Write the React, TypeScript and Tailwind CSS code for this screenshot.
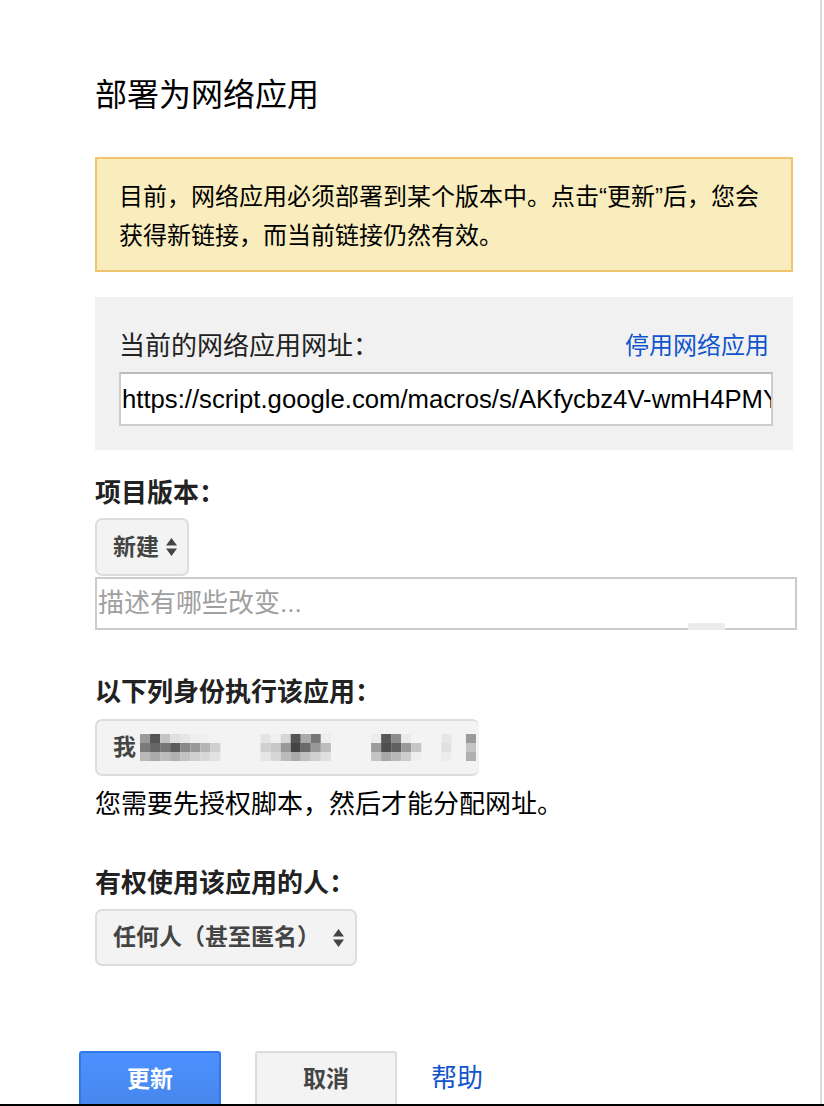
import React from "react"

const SelectArrows = () => (
  <svg width="13" height="20" viewBox="0 0 13 20" className="shrink-0">
    <path d="M6.5 1 L12 8.5 L1 8.5 Z" fill="#444" />
    <path d="M6.5 19 L12 11.5 L1 11.5 Z" fill="#444" />
  </svg>
)

// pixelated (blurred) e-mail address in the "execute as" select
const blurCells: [number, number, string][] = [
  [0, 0, "#9a9a9a"], [0, 1, "#7a7a7a"], [0, 2, "#b8b8b8"],
  [9, 0, "#555"], [9, 1, "#666"], [9, 2, "#aaa"],
  [18, 0, "#c4c4c4"], [18, 1, "#777"], [18, 2, "#bdbdbd"],
  [27, 0, "#e0e0e0"], [27, 1, "#5c5c5c"], [27, 2, "#b0b0b0"],
  [36, 0, "#e6e6e6"], [36, 1, "#888"], [36, 2, "#c2c2c2"],
  [45, 0, "#eee"], [45, 1, "#999"], [45, 2, "#cfcfcf"],
  [54, 0, "#f0f0f0"], [54, 1, "#b5b5b5"], [54, 2, "#d8d8d8"],
  [63, 0, "#f2f2f2"], [63, 1, "#cfcfcf"], [63, 2, "#e2e2e2"],
  [108, 0, "#e4e4e4"], [108, 1, "#d0d0d0"], [108, 2, "#e6e6e6"],
  [117, 0, "#f0f0f0"], [117, 1, "#c8c8c8"], [117, 2, "#d6d6d6"],
  [126, 0, "#d6d6d6"], [126, 1, "#999"], [126, 2, "#bbb"],
  [135, 0, "#555"], [135, 1, "#444"], [135, 2, "#aaa"],
  [144, 0, "#aaa"], [144, 1, "#6a6a6a"], [144, 2, "#c0c0c0"],
  [153, 0, "#777"], [153, 1, "#999"], [153, 2, "#d0d0d0"],
  [162, 0, "#ededed"], [162, 1, "#bcbcbc"], [162, 2, "#e0e0e0"],
  [207, 0, "#ececec"], [207, 1, "#9c9c9c"], [207, 2, "#c4c4c4"],
  [216, 0, "#585858"], [216, 1, "#4e4e4e"], [216, 2, "#a8a8a8"],
  [225, 0, "#8c8c8c"], [225, 1, "#606060"], [225, 2, "#b8b8b8"],
  [234, 0, "#eaeaea"], [234, 1, "#999"], [234, 2, "#cdcdcd"],
  [243, 0, "#f4f4f4"], [243, 1, "#c6c6c6"], [243, 2, "#eee"],
  [270, 0, "#e6e6e6"], [270, 1, "#e0e0e0"], [270, 2, "#ececec"],
  [292, 0, "#9a9a9a"], [292, 1, "#c4c4c4"], [292, 2, "#b0b0b0"],
]

const BlurredEmail = () => (
  <svg width="336" height="27" viewBox="0 0 301 27" preserveAspectRatio="none" className="shrink-0">
    {blurCells.map(([x, row, c], i) => (
      <rect key={i} x={x} y={row * 9} width="9" height="9" fill={c} />
    ))}
  </svg>
)

export default function App() {
  return (
    <div className="h-[1106px] w-[824px] overflow-hidden border-b-2 border-black bg-white font-['Liberation_Sans','Noto_Sans_CJK_SC',sans-serif] text-[#222]">
      <div className="h-full w-[822px] border-r-2 border-[#dddddd] pl-[95px] pt-[75px]">
        <h1 className="h-[40px] text-[32px] font-normal leading-[40px] text-black">部署为网络应用</h1>

        <div className="mt-[42px] w-[698px] border-2 border-[#f0c36d] bg-[#f9edbe] px-[22px] pt-[18px] pb-[15px] text-[24px] leading-[39px] text-black">
          目前，网络应用必须部署到某个版本中。点击“更新”后，您会获得新链接，而当前链接仍然有效。
        </div>

        <div className="mt-[25px] h-[153px] w-[698px] bg-[#f1f1f1] pl-[24px] pt-[33px]">
          <div className="flex h-[32px] w-[650px] items-center justify-between leading-[32px]">
            <span className="text-[26px] text-[#222]">当前的网络应用网址：</span>
            <a className="text-[24px] text-[#1155cc]">停用网络应用</a>
          </div>
          <div className="mt-[10px] flex h-[54px] w-[654px] items-center overflow-hidden border-2 border-[#cccccc] border-t-[#bbbbbb] bg-white pl-[1px]">
            <span className="whitespace-nowrap text-[25.7px] text-black">
              https://script.google.com/macros/s/AKfycbz4V-wmH4PMY
            </span>
          </div>
        </div>

        <div className="mt-[27px] h-[32px] text-[26px] font-bold leading-[32px]">项目版本：</div>
        <div className="mt-[9px] flex h-[58px] w-[94px] items-center gap-[6px] rounded-[7px] border-2 border-[#dddddd] bg-[#f3f3f3] pl-[16px]">
          <span className="text-[23px] font-bold text-[#444]">新建</span>
          <SelectArrows />
        </div>
        <div className="relative mt-[1px] flex h-[53px] w-[702px] items-center border-2 border-[#cccccc] bg-white pl-[1px]">
          <span className="text-[26px] text-[#a0a0a0]">描述有哪些改变...</span>
          <div className="absolute bottom-[-2px] left-[591px] h-[7px] w-[37px] rounded-t-[2px] bg-[#ececec]" />
        </div>

        <div className="mt-[46px] h-[32px] text-[26px] font-bold leading-[32px]">以下列身份执行该应用：</div>
        <div className="mt-[11px] flex h-[57px] w-[384px] items-center gap-[4px] overflow-hidden rounded-[7px] border-2 border-r-0 border-[#dddddd] bg-[#f3f3f3] pl-[16px]">
          <span className="text-[23px] font-bold text-[#444]">我</span>
          <BlurredEmail />
        </div>
        <div className="mt-[12px] h-[32px] text-[26px] leading-[32px] text-black">您需要先授权脚本，然后才能分配网址。</div>

        <div className="mt-[47px] h-[32px] text-[26px] font-bold leading-[32px]">有权使用该应用的人：</div>
        <div className="mt-[10px] flex h-[57px] w-[262px] items-center gap-[12px] rounded-[7px] border-2 border-[#dddddd] bg-[#f3f3f3] pl-[16px]">
          <span className="text-[23px] font-bold text-[#444]">任何人（甚至匿名）</span>
          <SelectArrows />
        </div>

        <div className="-ml-[16px] mt-[85px] flex items-start gap-[34px]">
          <button className="h-[56px] w-[142px] rounded-[3px] border-2 border-[#3079ed] bg-[#4d90fe] bg-gradient-to-b from-[#4d90fe] to-[#4787ed] text-[23px] font-bold text-white">
            更新
          </button>
          <button className="h-[56px] w-[142px] rounded-[3px] border-2 border-[#dcdcdc] bg-[#f3f3f3] text-[23px] font-bold text-[#444]">
            取消
          </button>
          <a className="h-[54px] text-[26px] leading-[54px] text-[#1155cc]">帮助</a>
        </div>
      </div>
    </div>
  )
}
